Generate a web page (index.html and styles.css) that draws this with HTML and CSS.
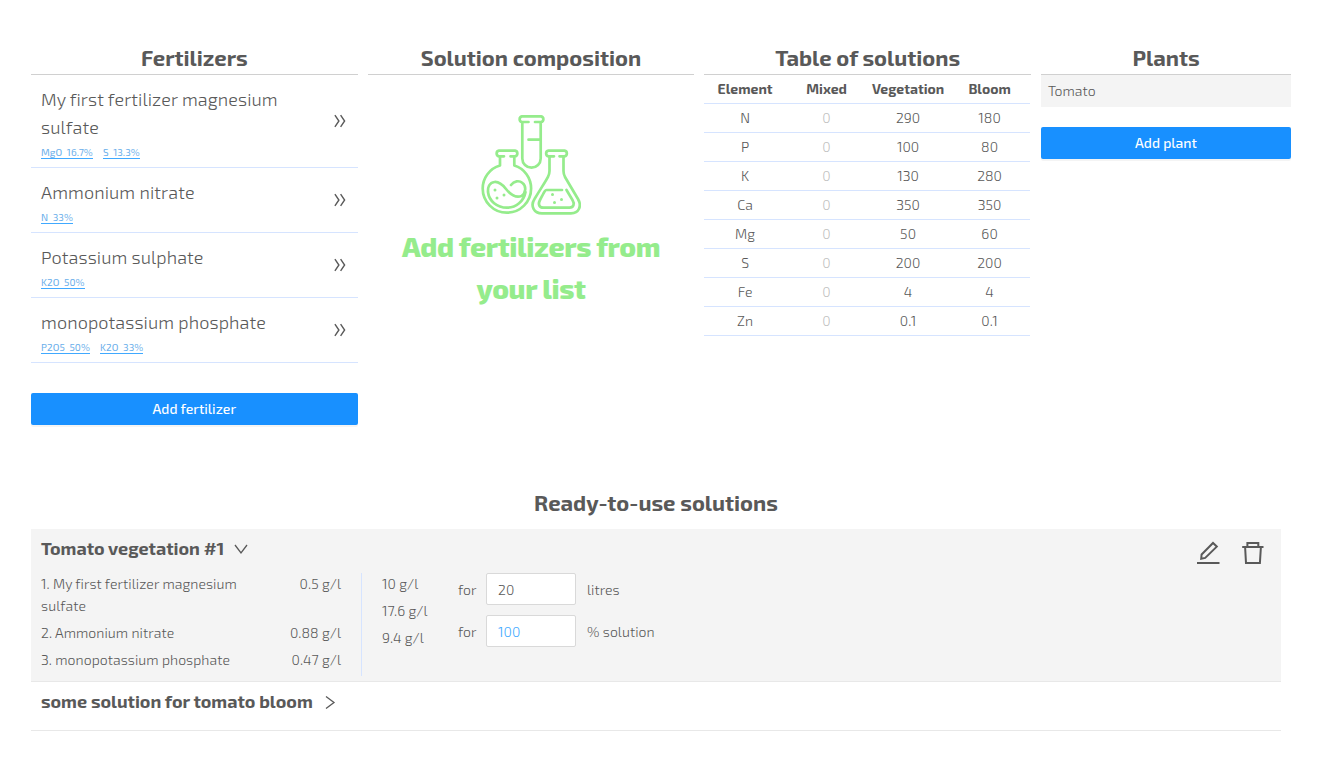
FILE: index.html
```
<!DOCTYPE html>
<html lang="en">
<head>
<meta charset="utf-8">
<title>Fertilizer solutions</title>
<link rel="stylesheet" href="styles.css">
</head>
<body>
<svg class="defs" width="0" height="0" aria-hidden="true">
  <symbol id="double-right" viewBox="0 0 12 14"><path d="M.9 1.200l4 5.800-4 5.800M6.600 1.200l4 5.800-4 5.800"/></symbol>
</svg>
<main class="page">
  <div class="columns">
    <section>
      <h2 class="heading ruled">Fertilizers</h2>
      <ul class="fertilizers">
        <li class="fertilizer">
          <div class="info"><div class="name">My first fertilizer magnesium sulfate</div>
            <div class="tags"><span class="tag">MgO&nbsp; 16.7%</span><span class="tag">S&nbsp; 13.3%</span></div></div>
          <svg class="add"><use href="#double-right"/></svg>
        </li>
        <li class="fertilizer">
          <div class="info"><div class="name">Ammonium nitrate</div>
            <div class="tags"><span class="tag">N&nbsp; 33%</span></div></div>
          <svg class="add"><use href="#double-right"/></svg>
        </li>
        <li class="fertilizer">
          <div class="info"><div class="name">Potassium sulphate</div>
            <div class="tags"><span class="tag">K2O&nbsp; 50%</span></div></div>
          <svg class="add"><use href="#double-right"/></svg>
        </li>
        <li class="fertilizer">
          <div class="info"><div class="name">monopotassium phosphate</div>
            <div class="tags"><span class="tag">P2O5&nbsp; 50%</span><span class="tag">K2O&nbsp; 33%</span></div></div>
          <svg class="add"><use href="#double-right"/></svg>
        </li>
      </ul>
      <button class="button add-fertilizer">Add fertilizer</button>
    </section>

    <section>
      <h2 class="heading ruled">Solution composition</h2>
      <div class="empty">
        <svg class="flasks" viewBox="0 0 100 100">
          <path d="M47.500 7H41a2.900 2.900 0 0 1 0-5.700H60a2.900 2.900 0 0 1 0 5.700H54M41.300 7V43.500a9.200 9.200 0 0 0 18.400 0V7M47.500 24.700H59"/>
          <path d="M23 41.300H18a2.900 2.900 0 0 1 0-5.700H34a2.900 2.900 0 0 1 0 5.700H29.500M19 41.300V50.500C8.500 53.500 1.700 63 1.700 73.500A24.200 24.200 0 0 0 50.100 73.500C50.100 63 43.500 53.500 33.300 50.500V41.300"/>
          <path d="M30 70C33 66 38 65 41.500 68C45.500 71 45 78 40.500 81C34 83.500 29 79 25 74C21 69 18 66.500 13.500 67C8 67.500 6.800 73 7 77C8 86 16 92.700 26 92.700C35 92.700 43 86 44.500 77"/>
          <path d="M73 41.300H67.500a2.900 2.900 0 0 1 0-5.700H83.500a2.900 2.900 0 0 1 0 5.700H78.500M68.500 41.300V56C68.500 61 66 63.500 53.500 84C49 91 53 98.300 61 98.300H90C98 98.300 101 91 97 84L84 62C83 60 82.500 58 82.500 56V41.300"/>
          <path d="M81 75H65.500C64 75 63.500 76.500 59 85C56.500 89.500 58.500 92.700 62.500 92.700H88.500C92.500 92.700 94 89 91.500 85L85.500 75"/>
          <g class="bubbles"><circle cx="14" cy="75" r="1.500"/><circle cx="23" cy="80" r="1.500"/><circle cx="16" cy="83" r="1.500"/><circle cx="71.500" cy="79.500" r="1.500"/><circle cx="80.500" cy="84.500" r="1.500"/><circle cx="73.500" cy="87.500" r="1.500"/></g>
        </svg>
        <p class="empty-text">Add fertilizers from<br>your list</p>
      </div>
    </section>

    <section>
      <h2 class="heading ruled">Table of solutions</h2>
      <table class="elements">
        <thead><tr><th>Element</th><th>Mixed</th><th>Vegetation</th><th>Bloom</th></tr></thead>
        <tbody>
          <tr><td>N</td><td>0</td><td>290</td><td>180</td></tr>
          <tr><td>P</td><td>0</td><td>100</td><td>80</td></tr>
          <tr><td>K</td><td>0</td><td>130</td><td>280</td></tr>
          <tr><td>Ca</td><td>0</td><td>350</td><td>350</td></tr>
          <tr><td>Mg</td><td>0</td><td>50</td><td>60</td></tr>
          <tr><td>S</td><td>0</td><td>200</td><td>200</td></tr>
          <tr><td>Fe</td><td>0</td><td>4</td><td>4</td></tr>
          <tr><td>Zn</td><td>0</td><td>0.1</td><td>0.1</td></tr>
        </tbody>
      </table>
    </section>

    <section>
      <h2 class="heading ruled">Plants</h2>
      <div class="plant">Tomato</div>
      <button class="button">Add plant</button>
    </section>
  </div>

  <section class="ready">
    <h2 class="heading ready-heading">Ready-to-use solutions</h2>
    <article class="solution open">
      <header class="solution-head">
        <h3 class="solution-name">Tomato vegetation #1</h3>
        <svg class="chevron" viewBox="0 0 14 14"><path d="M1 3l6 8 6-8"/></svg>
        <div class="actions">
          <svg width="24" height="24" viewBox="0 0 24 24"><path d="M1 22H23.500M5.200 17.800L5.600 13.500 17 2 20.800 5.600 9.200 16.900Z"/></svg>
          <svg width="24" height="24" viewBox="0 0 24 24"><path d="M1.200 6H22.500M6.400 6V2H17.300V6M4.100 6L5 22H18.900L19.900 6"/></svg>
        </div>
      </header>
      <div class="solution-body">
        <ol class="recipe">
          <li><span>1. My first fertilizer magnesium sulfate</span><span>0.5 g/l</span></li>
          <li><span>2. Ammonium nitrate</span><span>0.88 g/l</span></li>
          <li><span>3. monopotassium phosphate</span><span>0.47 g/l</span></li>
        </ol>
        <ul class="amounts"><li>10 g/l</li><li>17.6 g/l</li><li>9.4 g/l</li></ul>
        <div class="settings">
          <label><span>for</span><input class="field" type="text" value="20"><span>litres</span></label>
          <label><span>for</span><input class="field percent" type="text" value="100"><span>% solution</span></label>
        </div>
      </div>
    </article>
    <article class="solution closed">
      <h3 class="solution-name">some solution for tomato bloom</h3>
      <svg class="chevron" viewBox="0 0 14 14"><path d="M3 1.500l8 6-8 6"/></svg>
    </article>
  </section>
</main>
</body>
</html>
```

FILE: styles.css
```
* { box-sizing: border-box; }
body {
  margin: 0;
  background: #fff;
  color: #595959;
  font: 300 14px/22px "Exo 2", Roboto, "Open Sans", sans-serif;
  letter-spacing: .07px;
}
h2, h3, p, ul, ol { margin: 0; padding: 0; }
ul, ol { list-style: none; }
svg { fill: none; stroke: #595959; flex: none; }
.defs { display: block; }
.page { padding: 42px 29px 0 31px; }
.columns {
  display: grid;
  grid-template-columns: 1fr 1fr 1fr 250px;
  gap: 10px;
  height: 450px;
}
.heading {
  height: 33px;
  line-height: 31px;
  font-size: 22px;
  font-weight: 700;
  letter-spacing: -.02px;
  text-align: center;
}
.ruled { border-bottom: 1px solid #d0d0d0; }

.fertilizer {
  display: flex;
  justify-content: space-between;
  padding: 10px 10px 5px;
  border-bottom: 1px solid #d6e4ff;
}
.info { width: 260px; }
.name { margin-bottom: 1px; font-size: 18px; line-height: 28px; letter-spacing: .1px; }
.tags { display: flex; gap: 10px; height: 20px; }
.tag {
  height: 17px;
  line-height: 20px;
  border-bottom: 1px solid #40a9ff;
  color: #69aeea;
  font-size: 10px;
  font-weight: 400;
}
.add { align-self: center; width: 12px; height: 14px; margin: 0 1.500px 5px 0; stroke-width: 1.4; }
.button {
  display: block;
  width: 100%;
  height: 32px;
  padding: 0;
  border: 0;
  border-radius: 2px;
  background: #1890ff;
  box-shadow: 0 2px 0 rgba(0, 0, 0, .045);
  color: #fff;
  font: 500 14px/32px "Exo 2", Roboto, "Open Sans", sans-serif;
}
.add-fertilizer { margin-top: 30px; }

.empty { padding-top: 40px; text-align: center; }
.flasks { display: block; width: 100px; height: 100px; margin: 0 auto; stroke: #95ec8c; stroke-width: 2.700; stroke-linecap: round; stroke-linejoin: round; }
.bubbles { fill: #95ec8c; stroke: none; }
.empty-text { margin-top: 10px; color: #95ec8c; font-size: 28px; line-height: 42px; font-weight: 800; letter-spacing: -.38px; }

.elements { width: 326px; table-layout: fixed; border-collapse: separate; border-spacing: 0; text-align: center; }
.elements th, .elements td { height: 29px; padding: 0; border-bottom: 1px solid #d6e4ff; }
.elements th { font-weight: 700; letter-spacing: 0; }
.elements td:nth-child(2) { color: #bfbfbf; }

.plant { height: 32px; padding: 0 7px; margin-bottom: 20px; background: #f4f4f4; line-height: 32px; }

.ready { width: 1250px; }
.ready-heading { height: 37px; line-height: 21px; }
.solution { border-bottom: 1px solid #e8e8e8; }
.open { height: 153px; padding: 6px 10px; background: #f4f4f4; }
.closed { display: flex; align-items: center; height: 49px; padding: 0 10px 8px; }
.solution-head { display: flex; align-items: center; height: 28px; }
.solution-name { height: 28px; font-size: 18px; line-height: 26px; font-weight: 700; letter-spacing: -.03px; }
.chevron { width: 14px; height: 14px; margin-left: 10px; stroke-width: 1.3; }
.actions { display: flex; gap: 21px; margin: 8px 6px 0 auto; stroke-width: 2; }
.solution-body { display: flex; padding-top: 10px; height: 114px; }
.recipe { width: 321px; height: 103px; padding-right: 20px; border-right: 1px solid #d6e4ff; }
.recipe li { display: flex; justify-content: space-between; margin-bottom: 5px; }
.recipe li span:first-child { width: 220px; }
.amounts { width: 76px; margin-left: 20px; }
.amounts li { margin-bottom: 5px; }
.settings { display: flex; flex-direction: column; gap: 10px; }
.settings label { display: flex; align-items: center; height: 32px; line-height: 32px; }
.settings label span { padding-top: 2px; }
.settings label span:first-child { width: 28px; }
.field {
  width: 90px;
  height: 32px;
  margin: 0 11px 0 0;
  padding: 2px 11px 0;
  border: 1px solid #d9d9d9;
  border-radius: 2px;
  background: #fff;
  color: #595959;
  font: inherit;
  letter-spacing: inherit;
}
.percent { color: #40a9ff; }
```
